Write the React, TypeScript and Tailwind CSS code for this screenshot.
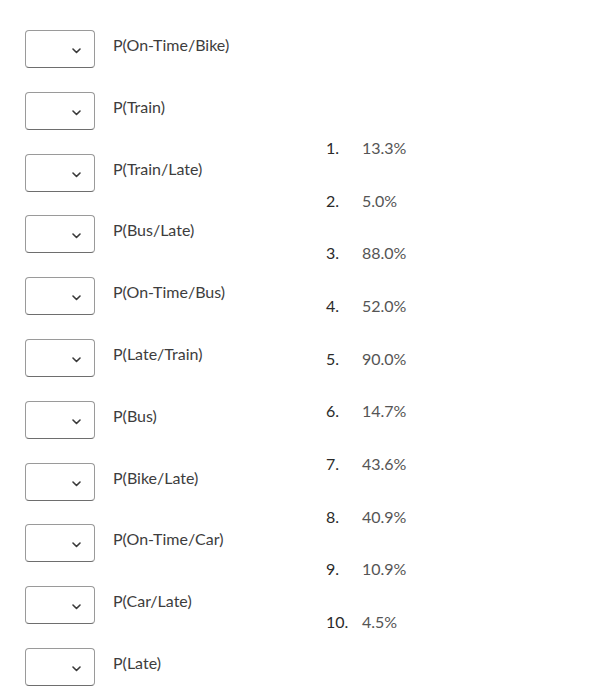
const LABELS = [
  'P(On-Time/Bike)',
  'P(Train)',
  'P(Train/Late)',
  'P(Bus/Late)',
  'P(On-Time/Bus)',
  'P(Late/Train)',
  'P(Bus)',
  'P(Bike/Late)',
  'P(On-Time/Car)',
  'P(Car/Late)',
  'P(Late)',
]

const VALUES = ['13.3%', '5.0%', '88.0%', '52.0%', '90.0%', '14.7%', '43.6%', '40.9%', '10.9%', '4.5%']

function SelectBox() {
  return (
    <div className="relative w-[70px] h-[38px] shrink-0 rounded-[4px] border border-[#9a9a9a] border-b-[#6e6e6e] bg-white">
      <svg
        className="absolute left-[46px] top-[17px]"
        width="9"
        height="6"
        viewBox="0 0 9 6"
        fill="none"
      >
        <path d="M1 1l3.5 3.5L8 1" stroke="#3a3a3a" strokeWidth="1.6" strokeLinecap="round" strokeLinejoin="round" />
      </svg>
    </div>
  )
}

export default function App() {
  return (
    <div className="w-[604px] h-[687px] bg-white flex font-['Lato',sans-serif] text-[16px] overflow-hidden">
      {/* match targets */}
      <div className="pl-[25px] pt-[30px] w-[326px] flex flex-col gap-[23.8px]">
        {LABELS.map((label) => (
          <div key={label} className="flex items-start">
            <SelectBox />
            <span className="ml-[18px] mt-[5px] leading-[20px] text-[#3d3d3d]">{label}</span>
          </div>
        ))}
      </div>

      {/* answers */}
      <ol className="pt-[138px]">
        {VALUES.map((value, i) => (
          <li key={value} className="flex h-[52.67px] leading-[20px]">
            <span className="w-[36px] text-[16px] text-[#2a2a2a]">{i + 1}.</span>
            <span className="text-[#555]">{value}</span>
          </li>
        ))}
      </ol>
    </div>
  )
}
